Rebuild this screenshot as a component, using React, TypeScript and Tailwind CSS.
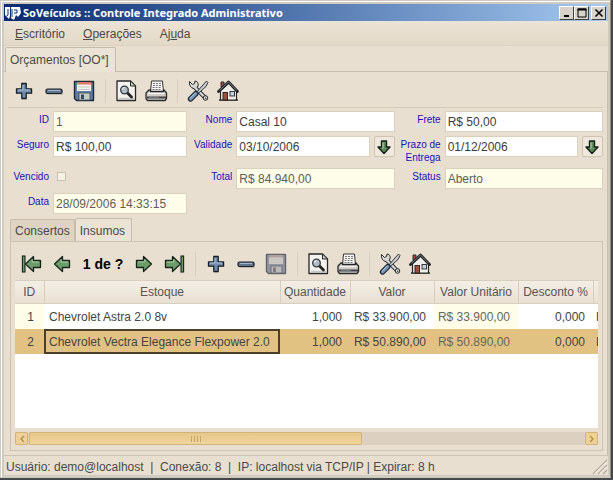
import type { ReactNode } from 'react'
import { clsx } from 'clsx'

const OUT = '#1c2026'

function Icon({ children }: { children: ReactNode }) {
  return (
    <svg viewBox="0 0 24 24" className="h-6 w-6 shrink-0" aria-hidden="true">
      {children}
    </svg>
  )
}

function PlusIcon() {
  return (
    <Icon>
      <path d="M10 5h4.500v5.500H20.500v4.500H14.500V20.500H10V15H4.500v-4.500H10z" fill="#a9a397" opacity=".6" />
      <path d="M9.800 4.500h4.400v5.300H19.500v4.400H14.200V19.500H9.800V14.200H4.500V9.800H9.800z" fill="#6f8db0" stroke={OUT} strokeWidth="1.300" strokeLinejoin="round" />
      <path d="M11 6v5H6M12.500 11H18" fill="none" stroke="#b4c8e0" strokeWidth="1" />
    </Icon>
  )
}

function MinusIcon() {
  return (
    <Icon>
      <rect x="5" y="11" width="16" height="5" rx="1.500" fill="#a9a397" opacity=".6" />
      <rect x="4" y="10" width="16" height="4.500" rx="1.500" fill="#5f7690" stroke={OUT} strokeWidth="1.200" />
      <path d="M6 11.500h12" stroke="#a3b6cc" strokeWidth="1" />
    </Icon>
  )
}

function SaveIcon({ off }: { off?: boolean }) {
  return (
    <Icon>
      <g opacity={off ? 0.85 : 1}>
        <path d="M2.500 2.500h19v19H4.500l-2-2z" fill={off ? '#85899a' : '#5f7da3'} stroke={off ? '#4c4f58' : '#1d2a3c'} strokeWidth="1.400" strokeLinejoin="round" />
        <rect x="5" y="3" width="14" height="9" fill={off ? '#c9c6c4' : '#f6f4f2'} />
        <rect x="5" y="3" width="14" height="2.500" fill={off ? '#a59696' : '#dc7a68'} />
        <path d="M6 8h12M6 10.500h12" stroke="#bdb9b4" strokeWidth=".8" />
        <rect x="7" y="14" width="11" height="7" fill={off ? '#b5b5b6' : '#c6cdc9'} stroke="#454d57" strokeWidth=".8" />
        <rect x="9" y="15.500" width="3" height="4.500" fill={off ? '#6b6d74' : '#36475b'} />
      </g>
    </Icon>
  )
}

function PreviewIcon() {
  return (
    <Icon>
      <path d="M3 2h13.500l5 5v14.500H3z" fill="#f4f3ef" stroke="#25272a" strokeWidth="1.300" strokeLinejoin="round" />
      <path d="M16.500 2v5h5z" fill="#d0d0cc" stroke="#25272a" strokeWidth="1" />
      <path d="M5 19.500h15" stroke="#c7c6c2" strokeWidth="1.500" />
      <path d="M13 13.500l4.500 4.500" stroke="#222" strokeWidth="2.800" strokeLinecap="round" />
      <circle cx="10.500" cy="11" r="3.800" fill="#b3bcc4" stroke="#33383d" strokeWidth="1.300" />
      <path d="M8.500 10.500a2 2 0 0 1 2-1.800" fill="none" stroke="#fff" />
    </Icon>
  )
}

function PrinterIcon() {
  return (
    <Icon>
      <path d="M6.500 13L7.500 2h11l1 11z" fill="#f7f6f3" stroke="#333" strokeWidth="1" />
      <path d="M9 4.500h8M9 6.500h8M8.500 8.500h9M8.500 10.500h9" stroke="#77797b" strokeWidth="1" strokeDasharray="2 1" />
      <path d="M2 14l3-3h1.500v1.500h13V11H20l2.500 3v5.500l-1.500 2H3.500L2 19.500z" fill="#cfcdc7" stroke="#26282a" strokeWidth="1.300" strokeLinejoin="round" />
      <path d="M4 14.500h16.500" stroke="#f7f6f3" strokeWidth="1.200" />
      <path d="M3 18.500h19" stroke="#3b3e42" strokeWidth="2" />
      <path d="M5 18.200h10" stroke="#9aa0a5" strokeWidth=".8" />
    </Icon>
  )
}

function ToolsIcon() {
  return (
    <Icon>
      <path d="M8 7.500L19 18.500" stroke="#26292c" strokeWidth="4" strokeLinecap="round" />
      <path d="M3.500 2.500l3 3 2-1 .5-2.500c3 .5 4 3 2.500 6-1.500 2-4 2-6 .5-1.500-1.200-2.500-3.500-2-6z" fill="#d7d8d6" stroke="#26292c" strokeWidth="1" strokeLinejoin="round" />
      <path d="M8 7.500L19.500 19" stroke="#d7d8d6" strokeWidth="2.200" strokeLinecap="round" />
      <circle cx="19.500" cy="19" r="2.300" fill="#d7d8d6" stroke="#26292c" strokeWidth="1" />
      <circle cx="19.700" cy="19.200" r=".8" fill="#444" />
      <path d="M20.500 2l1.500 1.500-2 4-9 8-1.200-1.300 8-9.200z" fill="#c3c8cb" stroke="#26292c" strokeWidth=".9" strokeLinejoin="round" />
      <path d="M4.500 20L10 14.500" stroke="#1f2b38" strokeWidth="5.400" strokeLinecap="round" />
      <path d="M4.700 19.800L9.800 14.700" stroke="#7595b8" strokeWidth="3.200" strokeLinecap="round" />
      <path d="M4.300 19L8.800 14.500" stroke="#c1d2e4" strokeWidth="1" strokeLinecap="round" />
    </Icon>
  )
}

function HomeIcon() {
  return (
    <Icon>
      <path d="M3 21h19" stroke="#57604a" strokeWidth="2" />
      <path d="M5 3h3v5H5z" fill="#a34a3c" stroke="#222" strokeWidth=".9" />
      <path d="M4.500 11.500L13 4l7.500 8v9h-16z" fill="#efede8" stroke="#26282a" strokeWidth="1.200" />
      <path d="M2.500 12.500L12.500 3l9 9.500" fill="none" stroke="#222427" strokeWidth="2.800" strokeLinejoin="round" strokeLinecap="round" />
      <path d="M3.500 11.300L12.500 3l8 8.300" fill="none" stroke="#8b8f93" strokeWidth=".8" />
      <rect x="7" y="13.500" width="4.500" height="7.500" fill="#9a5240" stroke="#2a1c18" strokeWidth=".9" />
      <rect x="14" y="12.500" width="4.500" height="4.500" fill="#c3d2e0" stroke="#26282a" strokeWidth=".9" />
    </Icon>
  )
}

function ArrowIcon({ flip, bar }: { flip?: boolean; bar?: boolean }) {
  return (
    <Icon>
      <g transform={flip ? 'matrix(-1 0 0 1 24 0)' : undefined}>
        <g transform={bar ? 'translate(-1 0)' : undefined}>
          <path d="M4.500 8.500h7V4.500L19.500 12l-8 7.500v-4h-7z" fill="#6b9c69" stroke="#16241a" strokeWidth="1.300" strokeLinejoin="round" />
          <path d="M6 10h6.800V7.500" fill="none" stroke="#a9cba3" strokeWidth="1" />
        </g>
        {bar && <rect x="19" y="4" width="2.600" height="16" fill="#6b9c69" stroke="#16241a" strokeWidth="1.100" />}
      </g>
    </Icon>
  )
}

function DownIcon() {
  return (
    <svg viewBox="0 0 16 16" className="h-4 w-4" aria-hidden="true">
      <path d="M5.500 2h5v6H14l-6 6.500L2 8h3.500z" fill="#5f8a5c" stroke="#14211a" strokeWidth="1.400" strokeLinejoin="round" />
      <path d="M7 3.500v6" stroke="#b8d6b0" />
    </svg>
  )
}

function ToolButton({ label, children, disabled }: { label: string; children: ReactNode; disabled?: boolean }) {
  return (
    <button type="button" aria-label={label} title={label} disabled={disabled} className="flex h-8 w-[30px] shrink-0 items-center justify-center">
      {children}
    </button>
  )
}

function Separator() {
  return (
    <div className="flex w-3 shrink-0 justify-center">
      <div className="h-6 w-px bg-[#d9cfbf]" />
    </div>
  )
}

function CommonTools({ saveDisabled }: { saveDisabled?: boolean }) {
  return (
    <>
      <ToolButton label="Adicionar"><PlusIcon /></ToolButton>
      <ToolButton label="Remover"><MinusIcon /></ToolButton>
      <ToolButton label="Salvar" disabled={saveDisabled}><SaveIcon off={saveDisabled} /></ToolButton>
      <Separator />
      <ToolButton label="Visualizar"><PreviewIcon /></ToolButton>
      <ToolButton label="Imprimir"><PrinterIcon /></ToolButton>
      <Separator />
      <ToolButton label="Ferramentas"><ToolsIcon /></ToolButton>
      <ToolButton label="Início"><HomeIcon /></ToolButton>
    </>
  )
}

interface FieldProps {
  id: string
  label: string
  value: string
  locked?: boolean
  picker?: boolean
}

function Label({ id, children }: { id: string; children: ReactNode }) {
  return (
    <label htmlFor={id} className="pt-0.5 pr-1 text-right text-[10px] leading-[13px] text-[#1a10c0]">
      {children}
    </label>
  )
}

function Field({ id, label, value, locked, picker }: FieldProps) {
  return (
    <>
      <Label id={id}>{label}</Label>
      <div className="flex min-w-0 items-start gap-1">
        <input
          id={id}
          type="text"
          defaultValue={value}
          readOnly={locked}
          className={clsx(
            'h-[21px] min-w-0 flex-1 border border-[#d9d0bd] px-0.5 text-xs outline-none',
            locked ? 'bg-[#fdfdea] text-[#5d5d55]' : 'bg-white text-[#3c3c3c]',
          )}
        />
        {picker && (
          <button type="button" aria-label={'Escolher ' + label} className="flex h-[21px] w-[21px] shrink-0 items-center justify-center rounded-xs border border-[#cfc4b2] bg-[#efe8dc]">
            <DownIcon />
          </button>
        )}
      </div>
    </>
  )
}

const rows = [
  { id: '1', stock: 'Chevrolet Astra 2.0 8v', qty: '1,000', value: 'R$ 33.900,00', unit: 'R$ 33.900,00', discount: '0,000' },
  { id: '2', stock: 'Chevrolet Vectra Elegance Flexpower 2.0', qty: '1,000', value: 'R$ 50.890,00', unit: 'R$ 50.890,00', discount: '0,000' },
]

const headers = ['ID', 'Estoque', 'Quantidade', 'Valor', 'Valor Unitário', 'Desconto %', '']

function ItemsTable() {
  return (
    <table className="w-full table-fixed border-collapse text-xs text-[#444]">
      <colgroup>
        <col className="w-[29px]" />
        <col />
        <col className="w-[70px]" />
        <col className="w-[84px]" />
        <col className="w-[84px]" />
        <col className="w-[75px]" />
        <col className="w-[5px]" />
      </colgroup>
      <thead>
        <tr className="h-[23px] bg-linear-to-b from-[#f3eee5] to-[#e9e0d2]">
          {headers.map((h, i) => (
            <th key={i} className={clsx('border-y border-[#d8cebd] p-0 text-center font-normal whitespace-nowrap text-[#555]', i < 6 && 'border-r')}>
              {h}
            </th>
          ))}
        </tr>
      </thead>
      <tbody>
        {rows.map((r, i) => {
          const active = i === 1
          return (
            <tr key={r.id} className={clsx('h-[25px] whitespace-nowrap', active && 'bg-[#e2c283]')}>
              <td className={clsx('p-0 pl-0.5 text-center', !active && 'bg-[#fdfdea]')}>{r.id}</td>
              <td className="p-0">
                <div className={clsx('flex h-[25px] items-center overflow-hidden border-2 pl-[3px]', active ? 'border-[#4a3f2a]' : 'border-transparent')}>
                  {r.stock}
                </div>
              </td>
              <td className="p-0 pr-2 text-right">{r.qty}</td>
              <td className="p-0 pr-2 text-right">{r.value}</td>
              <td className={clsx('p-0 pr-2 text-right text-[#66665a]', !active && 'bg-[#fdfdea]')}>{r.unit}</td>
              <td className="p-0 pr-2 text-right">{r.discount}</td>
              <td className="overflow-hidden p-0 pl-[3px]">R$</td>
            </tr>
          )
        })}
      </tbody>
    </table>
  )
}

function ScrollBar() {
  const end = 'flex w-[13px] shrink-0 items-center justify-center rounded-xs border border-[#d3b477] bg-[#edd199]'
  return (
    <div className="flex h-[13px] gap-px bg-[#dcd1c1]">
      <button type="button" aria-label="Rolar para a esquerda" className={end}>
        <svg viewBox="0 0 6 8" className="h-2 w-1.5"><path d="M5 1L2 4l3 3" fill="none" stroke="#b28d45" strokeWidth="1.300" /></svg>
      </button>
      <div className="flex flex-1">
        <div className="flex w-3/5 items-center justify-center gap-0.5 rounded-xs border border-[#d3b477] bg-linear-to-b from-[#e7c88a] to-[#efd59f]">
          <span className="h-1.5 w-px bg-[#c8a666]" />
          <span className="h-1.5 w-px bg-[#c8a666]" />
          <span className="h-1.5 w-px bg-[#c8a666]" />
          <span className="h-1.5 w-px bg-[#c8a666]" />
        </div>
      </div>
      <button type="button" aria-label="Rolar para a direita" className={end}>
        <svg viewBox="0 0 6 8" className="h-2 w-1.5"><path d="M1 1l3 3-3 3" fill="none" stroke="#b28d45" strokeWidth="1.300" /></svg>
      </button>
    </div>
  )
}

function TitleBar() {
  const box = 'flex h-[14px] w-[15px] items-center justify-center border border-t-white border-l-white border-r-[#404040] border-b-[#404040] bg-[#d8d3c9]'
  return (
    <header className="flex h-[17px] shrink-0 items-center bg-linear-to-r from-[#0a2a70] to-[#a6caf0] pr-0.5">
      <svg viewBox="0 0 18 16" className="h-4 w-[18px] shrink-0" aria-hidden="true">
        <path d="M1 2h5v9l-1 3-4-4zM7 2h9l1 6-3 4-2-2-2 5-3-2z" fill="#fff" />
        <path d="M4 4v6l-1.500 1M8 4v8M10 5h3v3h-3" fill="none" stroke="#0a2a70" strokeWidth="1" />
      </svg>
      <h1 className="flex-1 truncate pl-px font-['Noto_Sans',sans-serif] text-[11px] leading-4 font-bold text-white">
        SoVeículos :: Controle Integrado Administrativo
      </h1>
      <div className="flex">
        <button type="button" aria-label="Minimizar" className={box}>
          <svg viewBox="0 0 10 10" className="h-2.5 w-2.5"><path d="M2 8h5" stroke="#000" strokeWidth="2" /></svg>
        </button>
        <button type="button" aria-label="Maximizar" className={box}>
          <svg viewBox="0 0 10 10" className="h-2.5 w-2.5"><path d="M1 1h8v8H1z" fill="none" stroke="#000" strokeWidth="1" /><path d="M.5 1.500h9" stroke="#000" strokeWidth="2" /></svg>
        </button>
        <button type="button" aria-label="Fechar" className={clsx(box, 'ml-0.5')}>
          <svg viewBox="0 0 10 10" className="h-2.5 w-2.5"><path d="M1.500 1.500l7 7M8.500 1.500l-7 7" stroke="#000" strokeWidth="1.500" /></svg>
        </button>
      </div>
    </header>
  )
}

export default function App() {
  return (
    <div className="flex min-h-screen flex-col border-r-2 border-b-2 border-[#45494b] bg-[#d0cbc1] font-['Liberation_Sans',Arial,sans-serif] text-xs text-[#4a4a48]">
      <div className="flex flex-1 flex-col border border-[#d0cbc1] border-r-[#8d8a84]">
        <div className="flex flex-1 flex-col border-t border-l border-white p-0.5">
          <TitleBar />
          <main className="flex flex-1 flex-col bg-[#e8dfd0]">
            <nav className="flex h-[25px] shrink-0 items-center gap-[18px] border-b border-[#ddd2c1] bg-linear-to-b from-[#ebe3d6] to-[#e3d9c8] px-[11px] pt-0.5">
              <button type="button"><u>E</u>scritório</button>
              <button type="button"><u>O</u>perações</button>
              <button type="button">Aj<u>u</u>da</button>
            </nav>

            <div role="tablist" className="flex h-[26px] shrink-0 items-end border-b border-[#c6bcab] pl-px">
              <button type="button" role="tab" aria-selected="true" className="-mb-px h-[25px] rounded-t-xs border border-b-0 border-[#c6bcab] bg-[#ebe3d6] pr-1.5 pl-1">
                Orçamentos [OO*]
              </button>
            </div>

            <section className="flex flex-1 flex-col border-r border-[#c9bfaf]">
              <div className="mx-1 flex h-9 shrink-0 items-center border-b border-[#d6ccbb] pt-0.5 pl-px">
                <CommonTools />
              </div>

              <form className="grid grid-cols-[45px_134fr_49px_158fr_50px_158fr] gap-y-1 pt-[3px] pr-1 pl-1" onSubmit={(e) => e.preventDefault()}>
                <Field id="id" label="ID" value="1" locked />
                <Field id="nome" label="Nome" value="Casal 10" />
                <Field id="frete" label="Frete" value="R$ 50,00" />

                <Field id="seguro" label="Seguro" value="R$ 100,00" />
                <Field id="validade" label="Validade" value="03/10/2006" picker />
                <Field id="prazo" label="Prazo de Entrega" value="01/12/2006" picker />

                <Label id="vencido">Vencido</Label>
                <div className="pt-1 pl-1">
                  <input id="vencido" type="checkbox" className="block h-[9px] w-[9px] appearance-none border border-[#c9c0ad] bg-[#f6f3e6]" />
                </div>
                <Field id="total" label="Total" value="R$ 84.940,00" locked />
                <Field id="status" label="Status" value="Aberto" locked />

                <Field id="data" label="Data" value="28/09/2006 14:33:15" locked />
              </form>

              <div className="mt-1 mr-1 mb-1 ml-1.5 flex flex-1 flex-col">
                <div role="tablist" className="flex shrink-0 items-end">
                  <button type="button" role="tab" aria-selected="false" className="h-[22px] rounded-t-xs border border-b-0 border-[#c6bcab] bg-[#dfd4c4] px-1">
                    Consertos
                  </button>
                  <button type="button" role="tab" aria-selected="true" className="-mb-px h-6 rounded-t-xs border border-b-0 border-[#c6bcab] bg-[#ebe3d6] pr-1.5 pl-1">
                    Insumos
                  </button>
                </div>
                <div className="flex flex-1 flex-col border border-[#cdc3b2] px-1">
                  <div className="flex h-[38px] shrink-0 items-center pt-1.5 pl-0.5">
                    <ToolButton label="Primeiro"><ArrowIcon flip bar /></ToolButton>
                    <ToolButton label="Anterior"><ArrowIcon flip /></ToolButton>
                    <span className="w-[52px] text-center text-sm font-bold text-black">1 de ?</span>
                    <ToolButton label="Próximo"><ArrowIcon /></ToolButton>
                    <ToolButton label="Último"><ArrowIcon bar /></ToolButton>
                    <Separator />
                    <CommonTools saveDisabled />
                  </div>
                  <div className="flex-1 overflow-hidden bg-white">
                    <ItemsTable />
                  </div>
                  <div className="pt-1 pb-[5px]">
                    <ScrollBar />
                  </div>
                </div>
              </div>
            </section>

            <footer className="flex h-5 shrink-0 items-center justify-between border-t border-[#cdc3b2] pl-0.5">
              <p className="pt-0.5 whitespace-pre">{'Usuário: demo@localhost  |  Conexão: 8  |  IP: localhost via TCP/IP | Expirar: 8 h'}</p>
              <svg viewBox="0 0 16 16" className="h-4 w-4 self-end" aria-hidden="true">
                <path d="M1 15L15 1M6 15l9-9M11 15l4-4" stroke="#b5a999" strokeWidth="1.200" />
                <path d="M2.500 15L15 2.500M7.500 15L15 7.500" stroke="#f8f4ec" strokeWidth="1" />
              </svg>
            </footer>
          </main>
        </div>
      </div>
    </div>
  )
}
